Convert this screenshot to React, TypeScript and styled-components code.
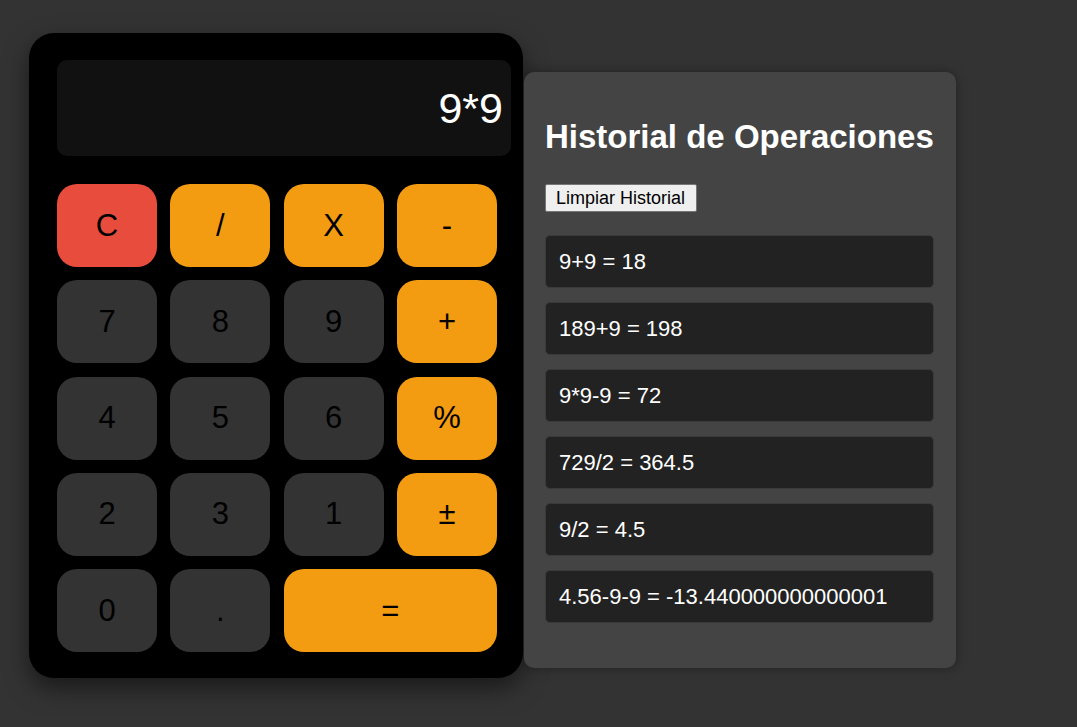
import React from "react";
import styled, { createGlobalStyle } from "styled-components";

const Global = createGlobalStyle`
  html, body { margin: 0; padding: 0; background: #333333; }
  body { font-family: "Liberation Sans", Arial, sans-serif; min-height: 727px; }
`;

const Page = styled.div`
  display: flex;
  align-items: flex-start;
  padding: 33px 0 0 29px;
`;

const Calculator = styled.div`
  width: 494px;
  box-sizing: border-box;
  background: #000;
  border-radius: 25px;
  padding: 27px 12px 26px 28px;
  box-shadow: 0 10px 25px rgba(0, 0, 0, 0.5);
  display: flex;
  flex-direction: column;
  gap: 28px;
`;

const Display = styled.div`
  height: 96px;
  background: #111111;
  border-radius: 10px;
  display: flex;
  align-items: center;
  justify-content: flex-end;
  padding-right: 8px;
  color: #fff;
  font-size: 43px;
`;

const Keys = styled.div`
  width: 440px;
  display: grid;
  grid-template-columns: repeat(4, 100px);
  grid-auto-rows: 83px;
  column-gap: 13.33px;
  row-gap: 13.25px;
`;

const Key = styled.button<{ $tone: "dark" | "op" | "clear"; $span?: number }>`
  border: none;
  border-radius: 20px;
  font-family: "Liberation Sans", Arial, sans-serif;
  font-size: 31px;
  color: #000;
  padding: 0;
  grid-column: span ${(p) => p.$span ?? 1};
  background: ${(p) =>
    p.$tone === "clear" ? "#e74c3c" : p.$tone === "op" ? "#f39c12" : "#333333"};
`;

const History = styled.div`
  margin-top: 39px;
  margin-left: 1px;
  width: 432px;
  box-sizing: border-box;
  background: #444444;
  border-radius: 10px;
  padding: 46px 22px 45px 21px;
  box-shadow: 0 0 12px rgba(0, 0, 0, 0.35);
`;

const Title = styled.h2`
  margin: 0 0 29px;
  font-size: 33px;
  font-weight: bold;
  color: #fff;
  line-height: 37px;
  white-space: nowrap;
`;

const ClearButton = styled.button`
  font-family: "Liberation Sans", Arial, sans-serif;
  font-size: 18px;
  height: 28px;
  padding: 0 11px 0 10px;
  background: #efefef;
  color: #000;
  border: 1px solid #767676;
  border-radius: 2px;
  margin-bottom: 23px;
`;

const List = styled.div`
  display: flex;
  flex-direction: column;
  gap: 14px;
`;

const Item = styled.div`
  height: 53px;
  box-sizing: border-box;
  background: #222222;
  border: 1px solid #3a3a3a;
  border-radius: 5px;
  padding: 0 13px;
  display: flex;
  align-items: center;
  color: #fff;
  font-size: 22px;
`;

const keys: { label: string; tone: "dark" | "op" | "clear"; span?: number }[] = [
  { label: "C", tone: "clear" },
  { label: "/", tone: "op" },
  { label: "X", tone: "op" },
  { label: "-", tone: "op" },
  { label: "7", tone: "dark" },
  { label: "8", tone: "dark" },
  { label: "9", tone: "dark" },
  { label: "+", tone: "op" },
  { label: "4", tone: "dark" },
  { label: "5", tone: "dark" },
  { label: "6", tone: "dark" },
  { label: "%", tone: "op" },
  { label: "2", tone: "dark" },
  { label: "3", tone: "dark" },
  { label: "1", tone: "dark" },
  { label: "±", tone: "op" },
  { label: "0", tone: "dark" },
  { label: ".", tone: "dark" },
  { label: "=", tone: "op", span: 2 },
];

const history = [
  "9+9 = 18",
  "189+9 = 198",
  "9*9-9 = 72",
  "729/2 = 364.5",
  "9/2 = 4.5",
  "4.56-9-9 = -13.440000000000001",
];

export default function App() {
  return (
    <>
      <Global />
      <Page>
        <Calculator>
          <Display>9*9</Display>
          <Keys>
            {keys.map((k) => (
              <Key key={k.label} $tone={k.tone} $span={k.span}>
                {k.label}
              </Key>
            ))}
          </Keys>
        </Calculator>
        <History>
          <Title>Historial de Operaciones</Title>
          <ClearButton>Limpiar Historial</ClearButton>
          <List>
            {history.map((h) => (
              <Item key={h}>{h}</Item>
            ))}
          </List>
        </History>
      </Page>
    </>
  );
}
